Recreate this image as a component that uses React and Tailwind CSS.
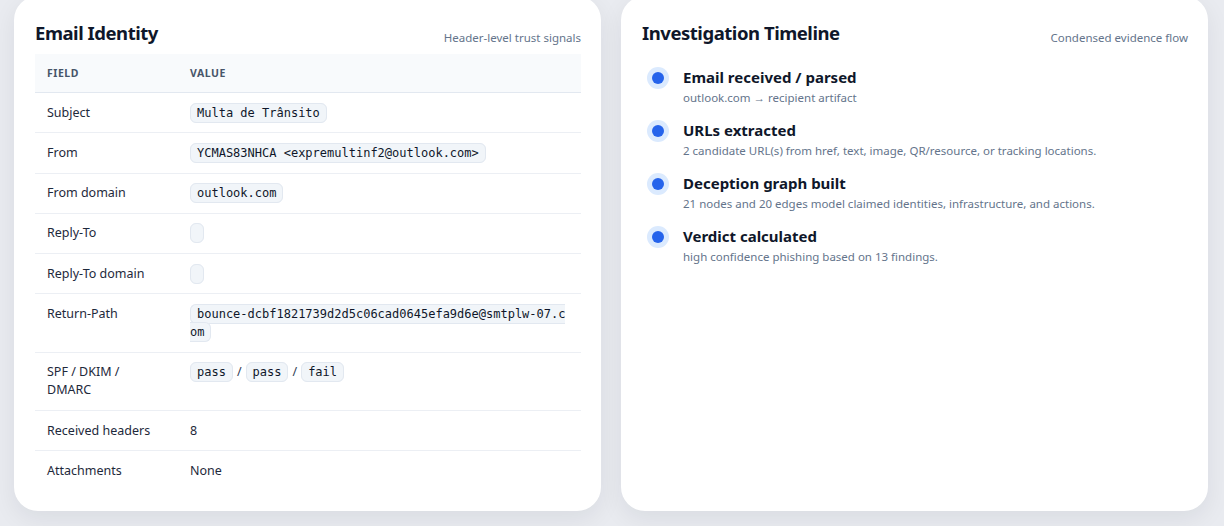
import React from 'react';

const sans = { fontFamily: '"Noto Sans", "Open Sans", sans-serif' };

const Chip = ({ children }) => (
    <code className="rounded-md border border-[#e2e8f0] bg-[#f1f5f9] px-1.5 py-[2px] leading-[14px] font-['DejaVu_Sans_Mono',monospace] text-[12px] text-[#0f172a] [word-break:break-all]">
        {children}
    </code>
);

const rows = [
    { field: 'Subject', value: <Chip>Multa de Trânsito</Chip> },
    { field: 'From', value: <Chip>YCMAS83NHCA &lt;expremultinf2@outlook.com&gt;</Chip> },
    { field: 'From domain', value: <Chip>outlook.com</Chip> },
    { field: 'Reply-To', value: <Chip></Chip> },
    { field: 'Reply-To domain', value: <Chip></Chip> },
    { field: 'Return-Path', value: <Chip>bounce-dcbf1821739d2d5c06cad0645efa9d6e@smtplw-07.com</Chip> },
    {
        field: 'SPF / DKIM / DMARC',
        value: (
            <>
                <Chip>pass</Chip>
                <span className="mx-1 text-[#334155]">/</span>
                <Chip>pass</Chip>
                <span className="mx-1 text-[#334155]">/</span>
                <Chip>fail</Chip>
            </>
        ),
    },
    { field: 'Received headers', value: '8' },
    { field: 'Attachments', value: 'None' },
];

const timeline = [
    { title: 'Email received / parsed', detail: 'outlook.com → recipient artifact' },
    { title: 'URLs extracted', detail: '2 candidate URL(s) from href, text, image, QR/resource, or tracking locations.' },
    { title: 'Deception graph built', detail: '21 nodes and 20 edges model claimed identities, infrastructure, and actions.' },
    { title: 'Verdict calculated', detail: 'high confidence phishing based on 13 findings.' },
];

const CardHeader = ({ title, hint }) => (
    <div className="flex items-center justify-between h-7">
        <h2 className="text-[18.5px] leading-7 font-bold text-[#0f172a] tracking-tight">{title}</h2>
        <span className="mt-[10px] text-[11.5px] leading-4 text-[#64748b]">{hint}</span>
    </div>
);

export default function App() {
    return (
        <div className="min-h-[526px] bg-[#e9ebf0] pl-[14px] pr-4 overflow-hidden" style={sans}>
            <div className="grid grid-cols-2 gap-5 -mt-1">
                {/* Email identity */}
                <div className="bg-white rounded-3xl shadow-[0_8px_24px_rgba(15,23,42,0.07)] pt-[23px] pb-[20px] pl-[21px] pr-5">
                    <CardHeader title="Email Identity" hint="Header-level trust signals" />
                    <table className="w-full mt-[7px] border-collapse text-[12.5px] leading-[18px] text-[#1e293b]">
                        <thead>
                            <tr className="bg-[#f8fafc] border-b border-[#e2e8f0]">
                                <th className="w-[143px] text-left px-3 py-[10px] text-[10.5px] font-bold uppercase tracking-wider text-[#475569]">Field</th>
                                <th className="text-left px-3 py-[10px] text-[10.5px] font-bold uppercase tracking-wider text-[#475569]">Value</th>
                            </tr>
                        </thead>
                        <tbody>
                            {rows.map((r, i) => (
                                <tr key={r.field} className={i < rows.length - 1 ? 'border-b border-[#eceff4]' : ''}>
                                    <td className="align-top px-3 py-[10.65px]">{r.field}</td>
                                    <td className="align-top px-3 py-[10.65px]">{r.value}</td>
                                </tr>
                            ))}
                        </tbody>
                    </table>
                </div>

                {/* Timeline */}
                <div className="bg-white rounded-3xl shadow-[0_8px_24px_rgba(15,23,42,0.07)] pt-[23px] pb-5 pl-[21px] pr-5">
                    <CardHeader title="Investigation Timeline" hint="Condensed evidence flow" />
                    <div className="mt-[20px] flex flex-col gap-[14px]">
                        {timeline.map((t) => (
                            <div key={t.title} className="flex items-start gap-[14px]">
                                <div className="ml-[5px] w-[22px] h-[22px] rounded-full bg-[#dbeafe] flex items-center justify-center shrink-0">
                                    <div className="w-3 h-3 rounded-full bg-[#2563eb]"></div>
                                </div>
                                <div>
                                    <div className="text-[15px] leading-5 font-bold text-[#0f172a]">{t.title}</div>
                                    <div className="mt-[3px] text-[11.5px] leading-4 text-[#64748b]">{t.detail}</div>
                                </div>
                            </div>
                        ))}
                    </div>
                </div>
            </div>
        </div>
    );
}
